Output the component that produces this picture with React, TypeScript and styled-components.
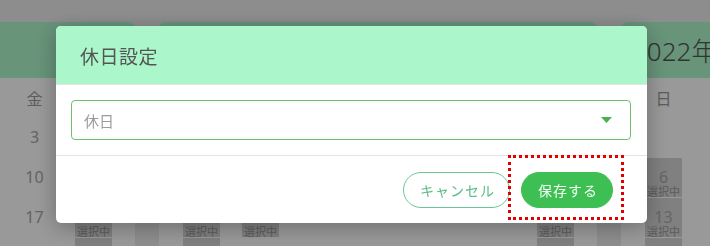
import React from 'react';
import styled, { createGlobalStyle } from 'styled-components';

const GlobalStyle = createGlobalStyle`
  html, body {
    margin: 0;
    padding: 0;
    background: #ececec;
    overflow: hidden;
    font-family: "Noto Sans CJK JP", "Noto Sans", sans-serif;
  }
  * {
    box-sizing: border-box;
  }
`;

const Months = styled.div`
  display: flex;
  gap: 24px;
  margin-left: -303px;
  padding-top: 22px;
  height: 246px;
`;

const Card = styled.div`
  flex-shrink: 0;
  width: 438px;
  background: #ffffff;
  border-radius: 6px 6px 0 0;
  overflow: hidden;
`;

const CardHeader = styled.div`
  height: 56px;
  display: flex;
  align-items: center;
  padding-left: 11px;
  background: #adf7cb;
  color: #555555;
  font-family: "Noto Sans", "Noto Sans CJK JP", sans-serif;
  font-size: 26px;
  font-weight: 300;
`;

const Grid = styled.div`
  display: grid;
  grid-template-columns: repeat(7, 59px);
  padding: 0 13px;
`;

const Weekday = styled.div`
  height: 40px;
  display: flex;
  align-items: center;
  justify-content: center;
  color: #9a9a9a;
  font-size: 16px;
`;

const Day = styled.div`
  height: 40px;
  display: flex;
  justify-content: center;
`;

const DayBody = styled.div<{ $selected?: boolean }>`
  width: 37px;
  height: 39px;
  padding-top: 11px;
  display: flex;
  flex-direction: column;
  align-items: center;
  background: ${(p) => (p.$selected ? '#d5d5d5' : 'transparent')};
`;

const DayNum = styled.span`
  font-family: "Noto Sans", sans-serif;
  font-size: 16px;
  line-height: 16px;
  color: #a8a8a8;
`;

const DayTag = styled.span`
  font-size: 11px;
  line-height: 12px;
  color: #9a9a9a;
`;

const Overlay = styled.div`
  position: fixed;
  inset: 0;
  background: rgba(0, 0, 0, 0.4);
  padding: 26px 0 0 56px;
`;

const Dialog = styled.div`
  width: 591px;
  background: #ffffff;
  border-radius: 5px;
  overflow: hidden;
  box-shadow: 0 4px 22px rgba(0, 0, 0, 0.3);
`;

const DialogHeader = styled.div`
  height: 59px;
  display: flex;
  align-items: center;
  padding-left: 24px;
  background: #abf7cb;
  border-bottom: 1px solid #e4e4e4;
`;

const Title = styled.h2`
  margin: 0;
  font-size: 19px;
  font-weight: 400;
  letter-spacing: 0.5px;
  color: #555555;
`;

const DialogBody = styled.div`
  padding: 15px 16px 15px 15px;
  border-bottom: 1px solid #e4e4e4;
`;

const Select = styled.div`
  height: 40px;
  display: flex;
  align-items: center;
  justify-content: space-between;
  padding: 0 18px 0 12px;
  border: 1px solid #6cc070;
  border-radius: 4px;
  font-size: 15px;
  color: #9c9c9c;
`;

const DialogFooter = styled.div`
  height: 67px;
  display: flex;
  align-items: center;
  justify-content: flex-end;
  gap: 11px;
  padding-right: 34px;
`;

const Button = styled.button<{ $primary?: boolean }>`
  height: 36px;
  padding: 0 14px 0 16px;
  border-radius: 18px;
  font-family: "Noto Sans CJK JP", sans-serif;
  font-size: 14px;
  letter-spacing: 1px;
  cursor: pointer;
  border: 1px solid ${(p) => (p.$primary ? '#3dbf53' : '#6ac593')};
  background: ${(p) => (p.$primary ? '#3dbf53' : '#ffffff')};
  color: ${(p) => (p.$primary ? '#f3fff4' : '#5cbb87')};
`;

const Highlight = styled.div`
  position: relative;
  display: flex;

  &::after {
    content: '';
    position: absolute;
    top: -17px;
    left: -13px;
    right: -11px;
    bottom: -12px;
    border: 3px dotted #e00000;
    pointer-events: none;
  }
`;

const WEEKDAYS = ['日', '月', '火', '水', '木', '金', '土'];

interface Month {
  title: string;
  first: number;
  selected: number[];
}

const MONTHS: Month[] = [
  { title: '2021年12月', first: 3, selected: [4, 5, 11, 12, 18, 19, 25, 26] },
  { title: '2022年1月', first: 6, selected: [1, 2, 8, 9, 10, 15, 16, 22, 23] },
  { title: '2022年2月', first: 2, selected: [5, 6, 12, 13, 19, 20] },
];

const MonthCard = ({ month }: { month: Month }) => {
  const cells: (number | null)[] = [];
  for (let i = 0; i < month.first; i++) cells.push(null);
  for (let d = 1; d <= 28 - month.first; d++) cells.push(d);
  return (
    <Card>
      <CardHeader>{month.title}</CardHeader>
      <Grid>
        {WEEKDAYS.map((w) => (
          <Weekday key={w}>{w}</Weekday>
        ))}
        {cells.map((d, i) => {
          const selected = d !== null && month.selected.includes(d);
          return (
            <Day key={i}>
              {d !== null && (
                <DayBody $selected={selected}>
                  <DayNum>{d}</DayNum>
                  {selected && <DayTag>選択中</DayTag>}
                </DayBody>
              )}
            </Day>
          );
        })}
      </Grid>
    </Card>
  );
};

const App = () => (
  <>
    <GlobalStyle />
    <Months>
      {MONTHS.map((m) => (
        <MonthCard key={m.title} month={m} />
      ))}
    </Months>
    <Overlay>
      <Dialog>
        <DialogHeader>
          <Title>休日設定</Title>
        </DialogHeader>
        <DialogBody>
          <Select>
            <span>休日</span>
            <svg width="11" height="6" viewBox="0 0 11 6">
              <path d="M0 0h11L5.5 6z" fill="#4caf50" />
            </svg>
          </Select>
        </DialogBody>
        <DialogFooter>
          <Button>キャンセル</Button>
          <Highlight>
            <Button $primary>保存する</Button>
          </Highlight>
        </DialogFooter>
      </Dialog>
    </Overlay>
  </>
);

export default App;
